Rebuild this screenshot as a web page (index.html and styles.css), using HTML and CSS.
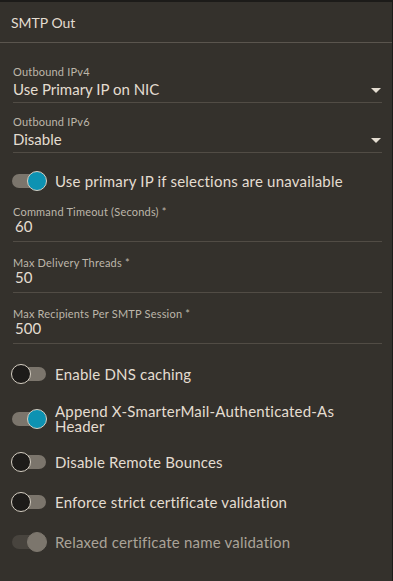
FILE: index.html
```html
<!DOCTYPE html>
<html>
<head>
<meta charset="utf-8">
<link rel="stylesheet" href="styles.css">
</head>
<body>
<div class="card">
  <div class="card-header">SMTP Out</div>
  <div class="card-body">
    <div class="field select">
      <div class="label">Outbound IPv4</div>
      <div class="value">Use Primary IP on NIC<span class="caret"></span></div>
    </div>
    <div class="field select">
      <div class="label">Outbound IPv6</div>
      <div class="value">Disable<span class="caret"></span></div>
    </div>
    <div class="toggle-row first">
      <span class="switch on"><span class="knob"></span></span>
      <span class="toggle-text">Use primary IP if selections are unavailable</span>
    </div>
    <div class="field input">
      <div class="label">Command Timeout (Seconds) *</div>
      <div class="value">60</div>
    </div>
    <div class="field input">
      <div class="label">Max Delivery Threads *</div>
      <div class="value">50</div>
    </div>
    <div class="field input">
      <div class="label">Max Recipients Per SMTP Session *</div>
      <div class="value">500</div>
    </div>
    <div class="toggles">
      <div class="toggle-row">
        <span class="switch"><span class="knob"></span></span>
        <span class="toggle-text">Enable DNS caching</span>
      </div>
      <div class="toggle-row multi">
        <span class="switch on"><span class="knob"></span></span>
        <span class="toggle-text">Append X-SmarterMail-Authenticated-As Header</span>
      </div>
      <div class="toggle-row">
        <span class="switch"><span class="knob"></span></span>
        <span class="toggle-text">Disable Remote Bounces</span>
      </div>
      <div class="toggle-row">
        <span class="switch"><span class="knob"></span></span>
        <span class="toggle-text">Enforce strict certificate validation</span>
      </div>
      <div class="toggle-row disabled">
        <span class="switch on"><span class="knob"></span></span>
        <span class="toggle-text">Relaxed certificate name validation</span>
      </div>
    </div>
  </div>
</div>
</body>
</html>
```

FILE: styles.css
```css
html, body {
  margin: 0;
  padding: 0;
  background: #1c1b19;
  height: 581px;
  overflow: hidden;
}
body {
  font-family: "Lato", "Open Sans", sans-serif;
  color: #e4ddd1;
  padding-top: 2px;
  box-sizing: border-box;
}
.card {
  background: #34312c;
  height: 579px;
  margin-right: 1px;
}
.card-header {
  height: 41px;
  box-sizing: border-box;
  padding: 12px 0 0 11px;
  font-size: 14px;
  line-height: 17px;
  border-bottom: 1px solid #5a554e;
}
.card-body {
  padding: 22px 10px 0 13px;
}
.field {
  border-bottom: 1px solid #514c45;
  margin-bottom: 12px;
}
.label {
  font-size: 11px;
  letter-spacing: 0.2px;
  color: #bdb6aa;
  line-height: 14px;
}
.value {
  font-size: 15px;
  line-height: 20px;
  padding-bottom: 3px;
  display: flex;
  align-items: center;
  justify-content: space-between;
}
.input { margin-bottom: 14px; }
.input .value {
  padding-left: 2px;
  margin-top: -3px;
  padding-bottom: 5px;
}
.caret {
  width: 0;
  height: 0;
  border-left: 5px solid transparent;
  border-right: 5px solid transparent;
  border-top: 5px solid #e4ddd1;
  margin-right: 1px;
  margin-top: 3px;
}
.toggle-row {
  display: flex;
  align-items: center;
  gap: 9px;
  margin-left: -1px;
  min-height: 20px;
}
.toggle-row.first { margin-top: 18px; margin-bottom: 14px; }
.toggle-row.multi { margin-bottom: -2px; }
.toggles {
  padding-top: 6px;
  display: flex;
  flex-direction: column;
  gap: 20px;
}
.switch {
  position: relative;
  flex: none;
  width: 34px;
  height: 14px;
  border-radius: 7px;
  background: #7b756c;
}
.knob {
  position: absolute;
  top: -3px;
  left: -1px;
  width: 18px;
  height: 18px;
  border-radius: 50%;
  background: #1d1b19;
  border: 1px solid #d6cfc3;
}
.switch.on .knob {
  left: 15px;
  background: #0d92b2;
}
.toggle-text {
  font-size: 15px;
  letter-spacing: 0.2px;
  line-height: 15px;
  max-width: 310px;
}
.disabled .switch { background: #48443e; }
.disabled .knob, .disabled .switch.on .knob {
  background: #7c766d;
  border-color: #7c766d;
}
.disabled .toggle-text { color: #aaa398; }
```
